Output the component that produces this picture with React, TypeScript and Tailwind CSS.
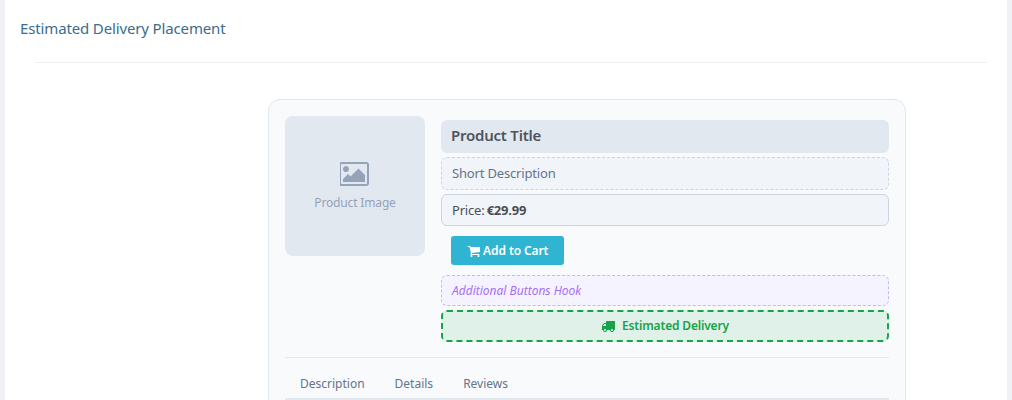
function ImageIcon({ className }: { className?: string }) {
  return (
    <svg viewBox="0 0 1920 1792" fill="currentColor" className={className}>
      <path d="M576 576q0 80-56 136t-136 56-136-56-56-136 56-136 136-56 136 56 56 136zm1024 384v448h-1408v-192l320-320 160 160 512-512zm96-704h-1600q-13 0-22.500 9.500t-9.500 22.500v1216q0 13 9.500 22.500t22.500 9.500h1600q13 0 22.500-9.500t9.500-22.500v-1216q0-13-9.500-22.500t-22.500-9.500zm160 32v1216q0 66-47 113t-113 47h-1600q-66 0-113-47t-47-113v-1216q0-66 47-113t113-47h1600q66 0 113 47t47 113z" />
    </svg>
  );
}

function CartIcon({ className }: { className?: string }) {
  return (
    <svg viewBox="0 0 1728 1792" fill="currentColor" className={className}>
      <path d="M704 1536q0 52-38 90t-90 38-90-38-38-90 38-90 90-38 90 38 38 90zm896 0q0 52-38 90t-90 38-90-38-38-90 38-90 90-38 90 38 38 90zm128-1088v512q0 24-16.500 42.500t-40.500 21.500l-1044 122q13 60 13 70 0 16-24 64h920q26 0 45 19t19 45-19 45-45 19h-1024q-26 0-45-19t-19-45q0-11 8-31.500t16-36 21.500-40 15.500-29.500l-177-823h-204q-26 0-45-19t-19-45 19-45 45-19h256q16 0 28.500 6.500t19.500 15.500 13 24.500 8 26 5.500 29.500 4.500 26h1201q26 0 45 19t19 45z" />
    </svg>
  );
}

function TruckIcon({ className }: { className?: string }) {
  return (
    <svg viewBox="0 0 1792 1792" fill="currentColor" className={className}>
      <path d="M640 1408q0-52-38-90t-90-38-90 38-38 90 38 90 90 38 90-38 38-90zm-384-512h384v-256h-158q-13 0-22 9l-195 195q-9 9-9 22v30zm1280 512q0-52-38-90t-90-38-90 38-38 90 38 90 90 38 90-38 38-90zm256-1088v1024q0 15-4 26.500t-13.500 18.500-16.500 11.500-23.500 6-22.500 2-25.500 0-22.500-.5q0 106-75 181t-181 75-181-75-75-181h-384q0 106-75 181t-181 75-181-75-75-181h-64q-3 0-22.500.5t-25.500 0-22.500-2-23.500-6-16.500-11.500-13.500-18.500-4-26.500q0-26 19-45t45-19v-320q0-8-.5-35t0-38 2.500-34.500 6.500-37 14-30.500 22.500-30l198-198q19-19 50.500-32t58.500-13h160v-192q0-26 19-45t45-19h1024q26 0 45 19t19 45z" />
    </svg>
  );
}

export default function App() {
  return (
    <div className="h-[400px] overflow-hidden bg-[#eff1f4] px-[5px] font-['Noto_Sans',sans-serif]">
      <div className="h-full overflow-hidden bg-white">
        <div className="h-[63px] pl-[15px] pt-[16px] text-[15px] leading-[24px] tracking-[-0.14px] text-[#3a6d8c]">Estimated Delivery Placement</div>
        <div className="ml-[30px] mr-[20px] -mt-px h-px bg-[#eef0f3]" />
        <div className="ml-[263px] mt-[36px] h-[360px] w-[638px] rounded-xl border border-[#e2e8f0] bg-[#f8fafc] px-4 pt-4">
          <div className="flex gap-4 border-b border-[#e2e8f0] pb-[15px]">
            <div className="flex h-[140px] w-[140px] shrink-0 flex-col items-center justify-center rounded-lg bg-[#e2e8f0] text-[#94a3b8]">
              <ImageIcon className="h-[28px] w-[30px]" />
              <span className="mt-[6px] pb-[1px] text-[12px] leading-[18px] tracking-[-0.15px]">Product Image</span>
            </div>
            <div className="flex min-w-0 flex-1 flex-col pt-1">
              <div className="flex h-[33px] items-center rounded-md bg-[#e2e8f0] px-[10px] pb-[2px] text-[15px] font-semibold tracking-[-0.23px] text-[#50555c]">Product Title</div>
              <div className="mt-1 flex h-[33px] items-center rounded-md border border-dashed border-[#cbd5e1] bg-[#f1f5f9] px-[10px] text-[13px] tracking-[-0.17px] text-[#64748b]">Short Description</div>
              <div className="mt-1 flex h-[32px] items-center rounded-md border border-[#cbd5e1] bg-[#f1f5f9] px-[10px] pt-[2px] text-[13px] tracking-[-0.2px] text-[#4a4f57]">
                <span>Price:&nbsp;</span><b className="-ml-px font-bold">€29.99</b>
              </div>
              <div className="mt-[10px] px-[10px]">
                <button className="flex h-[29px] w-[113px] items-center justify-center gap-[3px] rounded-[3px] bg-[#2fb5d2] text-[12px] font-semibold tracking-[-0.1px] text-white">
                  <CartIcon className="h-[14px] w-[13.5px]" />Add to Cart
                </button>
              </div>
              <div className="mt-[10px] flex h-[31px] items-center rounded-md border border-dashed border-[#c4b5fd] bg-[#f5f3ff] px-[10px] pt-[1px] text-[12px] italic text-[#a770f5]">Additional Buttons Hook</div>
              <div className="mt-1 flex h-[32px] items-center justify-center gap-[7px] rounded-md border-2 border-dashed border-[#16a34a] bg-[#dff1e8] text-[12px] font-semibold tracking-[-0.17px] text-[#16a34a]">
                <TruckIcon className="h-[14px] w-[14px]" />Estimated Delivery
              </div>
            </div>
          </div>
          <div className="mt-[17px] flex gap-[30px] border-b-[3px] border-[#e2e8f0] px-[15px] pb-[5px] text-[12px] leading-[18px] text-[#64748b]">
            <span>Description</span><span>Details</span><span>Reviews</span>
          </div>
        </div>
      </div>
    </div>
  );
}
